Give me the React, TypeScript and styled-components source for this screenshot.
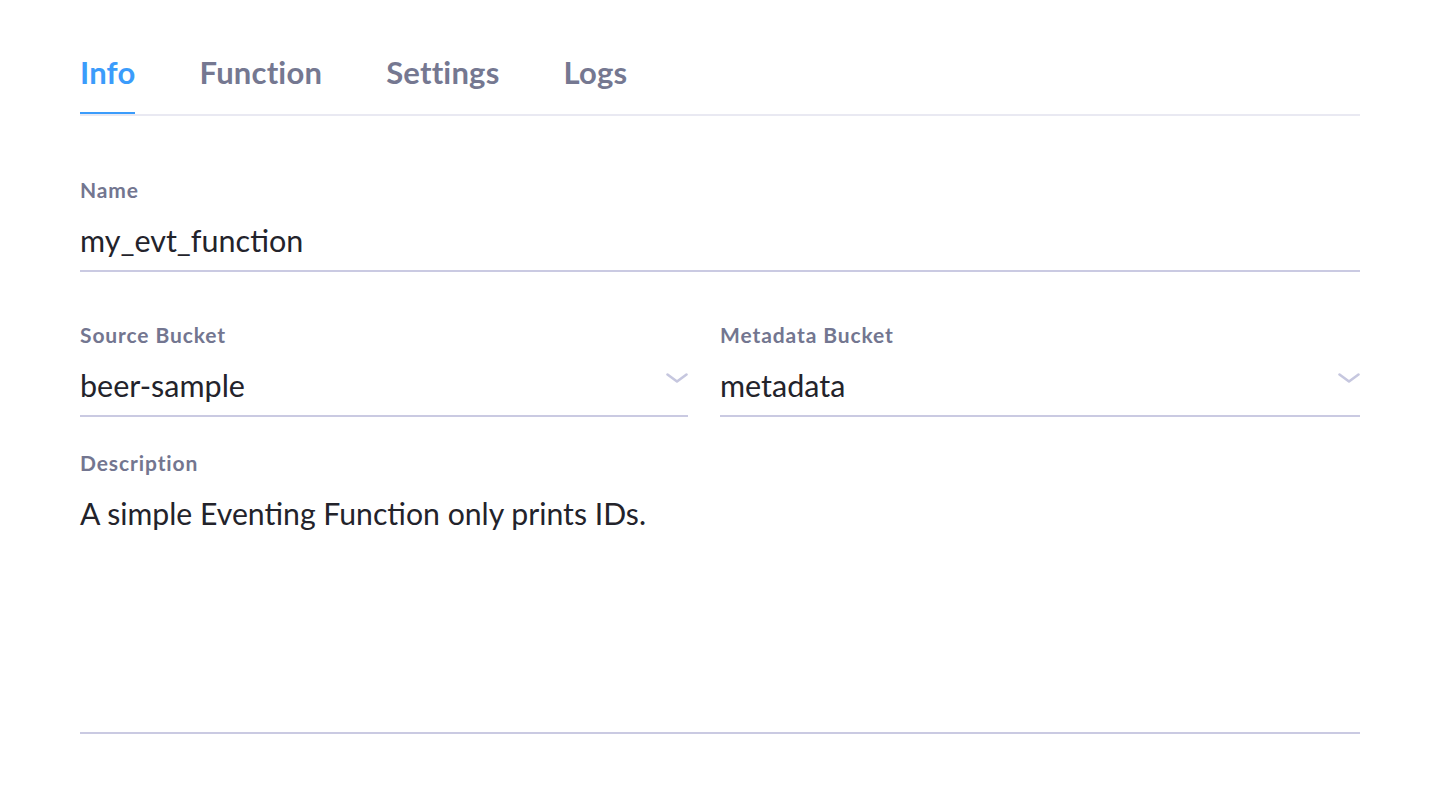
import React from "react";
import styled, { createGlobalStyle } from "styled-components";

const Global = createGlobalStyle`
  html, body { margin: 0; padding: 0; background: #ffffff; }
  body { font-family: "Source Sans Pro", Lato, "Noto Sans", sans-serif; -webkit-font-smoothing: antialiased; }
  * { box-sizing: border-box; }
`;

const Page = styled.div`
  padding: 52px 80px 0 80px;
  width: 1440px;
`;

const TabBar = styled.nav`
  display: flex;
  gap: 64px;
  border-bottom: 2px solid #e9e9f2;
`;

const Tab = styled.div<{ $active?: boolean }>`
  font-size: 31px;
  font-weight: 700;
  letter-spacing: 0.2px;
  line-height: 40px;
  padding-bottom: 20px;
  color: ${(p) => (p.$active ? "#3b9cfb" : "#757891")};
  border-bottom: 2px solid ${(p) => (p.$active ? "#3b9cfb" : "transparent")};
`;

const Form = styled.div`
  display: flex;
  flex-direction: column;
  padding-top: 62px;
`;

const Field = styled.div<{ $padRight?: number }>`
  display: flex;
  flex-direction: column;
  padding-right: ${(p) => p.$padRight ?? 0}px;
`;

const Label = styled.label`
  font-size: 21px;
  font-weight: 700;
  letter-spacing: 0.9px;
  line-height: 24px;
  color: #737690;
  margin-bottom: 18px;
`;

const Value = styled.div`
  font-size: 30.5px;
  line-height: 40px;
  color: #23232b;
  padding-bottom: 10px;
  border-bottom: 2px solid #cacae2;
`;

const SelectBox = styled(Value)`
  display: flex;
  align-items: center;
  justify-content: space-between;
`;

const Row = styled.div`
  display: grid;
  grid-template-columns: 1fr 1fr;
  margin-top: 51px;
`;

const TextArea = styled(Value)`
  height: 241px;
  font-size: 30.2px;
`;

const DescField = styled(Field)`
  margin-top: 34px;
`;

const ChevronIcon = styled.svg`
  margin-top: -14px;
  flex: none;
`;

const Chevron = () => (
  <ChevronIcon width="22" height="10" viewBox="0 0 22 10" fill="none">
    <path d="M1.5 1.5 L11 8.5 L20.5 1.5" stroke="#c6c7df" strokeWidth="2.6" strokeLinecap="round" strokeLinejoin="round" />
  </ChevronIcon>
);

export default function App() {
  return (
    <>
      <Global />
      <Page>
        <TabBar>
          <Tab $active>Info</Tab>
          <Tab>Function</Tab>
          <Tab>Settings</Tab>
          <Tab>Logs</Tab>
        </TabBar>
        <Form>
          <Field>
            <Label>Name</Label>
            <Value>my_evt_function</Value>
          </Field>
          <Row>
            <Field $padRight={32}>
              <Label>Source Bucket</Label>
              <SelectBox>
                <span>beer-sample</span>
                <Chevron />
              </SelectBox>
            </Field>
            <Field>
              <Label>Metadata Bucket</Label>
              <SelectBox>
                <span>metadata</span>
                <Chevron />
              </SelectBox>
            </Field>
          </Row>
          <DescField>
            <Label>Description</Label>
            <TextArea>A simple Eventing Function only prints IDs.</TextArea>
          </DescField>
        </Form>
      </Page>
    </>
  );
}
